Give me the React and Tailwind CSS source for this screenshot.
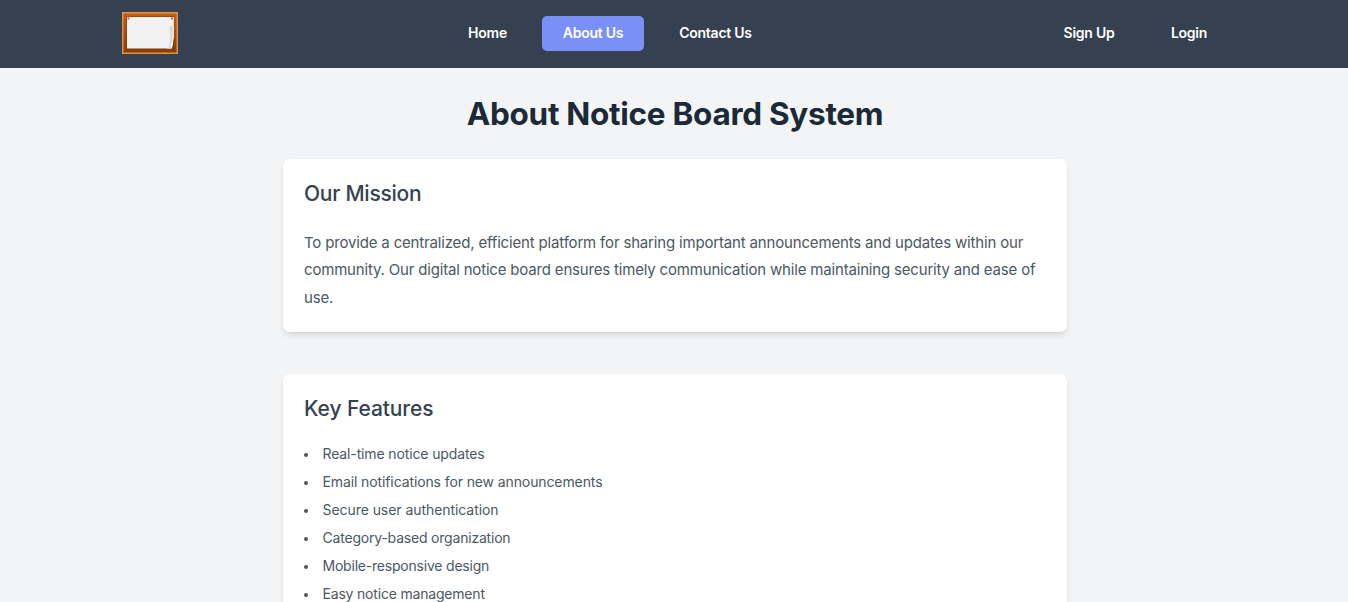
const features = [
  ['Real-time notice updates', 'tracking-[-0.13px]'],
  ['Email notifications for new announcements', 'tracking-[-0.11px]'],
  ['Secure user authentication', 'tracking-[-0.06px]'],
  ['Category-based organization', 'tracking-[-0.2px]'],
  ['Mobile-responsive design', 'tracking-[-0.21px]'],
  ['Easy notice management', 'tracking-[-0.19px]'],
];

function Logo() {
  return (
    <svg width="56" height="42" viewBox="0 0 56 42" aria-hidden="true">
      <defs>
        <linearGradient id="frame" x1="0" x2="0" y1="0" y2="1">
          <stop offset="0" stopColor="#bd6018" />
          <stop offset="0.5" stopColor="#a94c0b" />
          <stop offset="1" stopColor="#8c3b06" />
        </linearGradient>
        <linearGradient id="curl" x1="0" x2="1">
          <stop offset="0" stopColor="#f2f2f3" />
          <stop offset="0.65" stopColor="#d6d6d6" />
          <stop offset="1" stopColor="#f4f4f4" />
        </linearGradient>
      </defs>
      <rect width="56" height="42" fill="#dc9448" />
      <rect x="1.500" y="1.500" width="53" height="39" fill="url(#frame)" />
      <rect x="4.500" y="4.500" width="47.500" height="33" fill="#853807" />
      <path d="M5 5H52Q52 20 50.500 36.500H5Z" fill="#f2f2f3" />
      <path d="M47 14H52Q52 24 50 36.500H45Q49 30 47 14Z" fill="url(#curl)" />
      <path d="M51.700 20Q51 28 48.500 34.500L50 35Q52 30 51.700 20Z" fill="#ffffff" />
      <path d="M52 25V38H49.500Q51.500 33 52 25Z" fill="#7c3206" />
      <rect x="5.500" y="5.500" width="2" height="2" fill="#dc5660" />
      <rect x="49" y="5.500" width="2" height="2" fill="#ba5960" />
    </svg>
  );
}

function Card({ title, titleTracking, children }) {
  return (
    <section className="rounded-[7px] bg-white p-[21px] shadow-md">
      <h2 className={`text-[21px] leading-7 font-medium text-[#364152] ${titleTracking}`}>{title}</h2>
      {children}
    </section>
  );
}

export default function App() {
  return (
    <div className="h-[602px] overflow-hidden bg-[#f3f4f6] font-['Inter','Liberation_Sans',sans-serif]">
      <nav className="flex h-[68px] items-start bg-[#354150] pl-[122px] text-[14px] leading-[21px] font-semibold tracking-[-0.25px] text-white">
        <div className="w-[325px] shrink-0 pt-3"><Logo /></div>
        <div className="flex gap-[14px] pt-4">
          <a className="flex h-[35px] w-[81px] items-center justify-center rounded-[5px] pb-0.5">Home</a>
          <a className="flex h-[35px] w-[102px] items-center justify-center rounded-[5px] bg-[#7b8ff8] pb-0.5">About Us</a>
          <a className="flex h-[35px] w-[115px] items-center justify-center rounded-[5px] pb-0.5">Contact Us</a>
        </div>
        <div className="ml-[269px] flex gap-[14px] pt-4">
          <a className="flex h-[35px] w-[94px] items-center justify-center pb-0.5">Sign Up</a>
          <a className="flex h-[35px] w-[78px] items-center justify-center pb-0.5">Login</a>
        </div>
      </nav>
      <main className="ml-[283px] w-[784px] pt-7">
        <h1 className="mb-7 text-center text-[31.5px] leading-[35px] font-bold tracking-[-0.28px] text-[#1c2937]">About Notice Board System</h1>
        <div className="flex flex-col gap-[42px]">
          <Card title="Our Mission" titleTracking="tracking-[-0.25px]">
            <div className="mt-[21px] h-[82px] text-[15px] leading-[27.3px] whitespace-nowrap text-[#4b5863]">
              <p className="tracking-[-0.17px]">To provide a centralized, efficient platform for sharing important announcements and updates within our</p>
              <p className="tracking-[-0.18px]">community. Our digital notice board ensures timely communication while maintaining security and ease of</p>
              <p className="tracking-[-0.18px]">use.</p>
            </div>
          </Card>
          <Card title="Key Features" titleTracking="tracking-[-0.08px]">
            <ul className="mt-5 flex flex-col gap-[7px] text-[14px] leading-[21px] text-[#4b5863]">
              {features.map(([label, tracking]) => (
                <li key={label} className="flex items-center">
                  <span className="mt-[3px] mr-[14.5px] h-[4px] w-[4px] rounded-full bg-[#4b5863]" />
                  <span className={tracking}>{label}</span>
                </li>
              ))}
            </ul>
          </Card>
        </div>
      </main>
    </div>
  );
}
